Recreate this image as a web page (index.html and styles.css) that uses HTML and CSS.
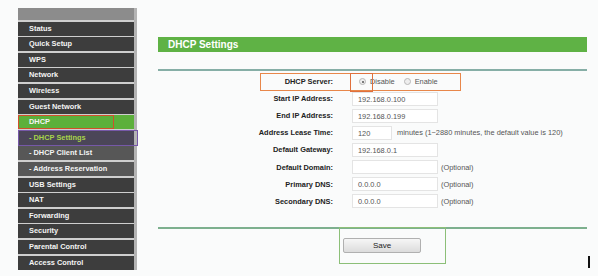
FILE: index.html
```html
<!DOCTYPE html>
<html lang="en">
<head>
    <meta charset="UTF-8">
    <title>DHCP Settings</title>
    <link rel="stylesheet" href="styles.css">
</head>
<body>
    <div class="page">
        <div class="side">
            <div class="side-top"></div>
            <div class="item">Status</div>
            <div class="item">Quick Setup</div>
            <div class="item">WPS</div>
            <div class="item">Network</div>
            <div class="item">Wireless</div>
            <div class="item">Guest Network</div>
            <div class="item active">DHCP<span class="mark-red"></span></div>
            <div class="item sub current">- DHCP Settings<span class="mark-purple"></span></div>
            <div class="item sub">- DHCP Client List</div>
            <div class="item sub">- Address Reservation</div>
            <div class="item">USB Settings</div>
            <div class="item">NAT</div>
            <div class="item">Forwarding</div>
            <div class="item">Security</div>
            <div class="item">Parental Control</div>
            <div class="item">Access Control</div>
        </div>

        <div class="main">
            <div class="title">DHCP Settings</div>
            <div class="rule"></div>

            <div class="form">
                <div class="row server">
                    <label>DHCP Server:</label>
                    <div class="field">
                        <span class="radio on"></span><span class="opt">Disable</span>
                        <span class="radio"></span><span class="opt">Enable</span>
                    </div>
                    <span class="mark-server"></span>
                    <span class="mark-radio"></span>
                </div>
                <div class="row">
                    <label>Start IP Address:</label>
                    <div class="field"><span class="input">192.168.0.100</span></div>
                </div>
                <div class="row">
                    <label>End IP Address:</label>
                    <div class="field"><span class="input">192.168.0.199</span></div>
                </div>
                <div class="row">
                    <label>Address Lease Time:</label>
                    <div class="field"><span class="input short">120</span><span class="note wide">minutes (1~2880 minutes, the default value is 120)</span></div>
                </div>
                <div class="row">
                    <label>Default Gateway:</label>
                    <div class="field"><span class="input">192.168.0.1</span></div>
                </div>
                <div class="row">
                    <label>Default Domain:</label>
                    <div class="field"><span class="input"></span><span class="note">(Optional)</span></div>
                </div>
                <div class="row">
                    <label>Primary DNS:</label>
                    <div class="field"><span class="input">0.0.0.0</span><span class="note">(Optional)</span></div>
                </div>
                <div class="row">
                    <label>Secondary DNS:</label>
                    <div class="field"><span class="input">0.0.0.0</span><span class="note">(Optional)</span></div>
                </div>
            </div>

            <div class="rule bottom"></div>
            <div class="actions">
                <button class="save">Save</button>
                <span class="mark-save"></span>
            </div>
            <span class="cursor"></span>
        </div>
    </div>
</body>
</html>
```

FILE: styles.css
```css
body {
    margin: 0;
    background: #fafbfb;
    font-family: "Liberation Sans", Arial, sans-serif;
    width: 598px;
    height: 276px;
    overflow: hidden;
}
.page {
    display: flex;
    align-items: flex-start;
}
.side {
    margin: 8px 0 0 18px;
    width: 116px;
    border-right: 3px solid #b4b4b4;
    background: #cfcfcf;
    display: flex;
    flex-direction: column;
    gap: 1.6px;
}
.side-top {
    height: 12px;
    background: #8c8c8c;
}
.item {
    position: relative;
    height: 14px;
    line-height: 14px;
    padding-left: 11px;
    background: #3d3d3d;
    color: #f4f4f4;
    font-size: 7.4px;
    font-weight: bold;
    white-space: nowrap;
}
.item.sub {
    background: #575757;
}
.item.active {
    background: #5cb03b;
}
.item.current {
    background: #4b4658;
    color: #a8d44a;
}
.mark-red {
    position: absolute;
    left: 0;
    top: 0;
    width: 96px;
    height: 14px;
    border: 1px solid #d0502a;
    box-sizing: border-box;
}
.mark-purple {
    position: absolute;
    left: 0;
    top: -1px;
    width: 120px;
    height: 16px;
    border: 1px solid #7658a8;
    box-sizing: border-box;
}
.main {
    position: relative;
    margin: 37px 0 0 21px;
    width: 429px;
}
.title {
    height: 15px;
    line-height: 15px;
    background: #5fb245;
    color: #fff;
    font-size: 10px;
    font-weight: bold;
    padding-left: 10px;
}
.rule {
    margin-top: 17px;
    height: 2px;
    background: #86aea6;
}
.form {
    margin-top: 2px;
}
.row {
    position: relative;
    display: grid;
    grid-template-columns: 175px 1fr;
    column-gap: 19px;
    height: 17.1px;
    align-items: center;
}
.row label {
    text-align: right;
    font-size: 7.4px;
    font-weight: bold;
    color: #222;
}
.field {
    display: flex;
    align-items: center;
    font-size: 7.4px;
    color: #555;
}
.input {
    box-sizing: border-box;
    width: 86px;
    height: 14px;
    line-height: 13px;
    padding-left: 5px;
    border: 1px solid #e4e4e4;
    background: #fff;
}
.input.short {
    width: 40px;
}
.note {
    margin-left: 3px;
}
.note.wide {
    margin-left: 5px;
}
.radio {
    box-sizing: border-box;
    width: 7px;
    height: 7px;
    border-radius: 50%;
    border: 1px solid #b8b8b8;
    background: #eee;
    margin: 0 4px 0 7px;
    position: relative;
}
.radio + .opt + .radio {
    margin-left: 9px;
}
.radio.on::after {
    content: "";
    position: absolute;
    left: 1.5px;
    top: 1.5px;
    width: 2px;
    height: 2px;
    border-radius: 50%;
    background: #555;
}
.mark-server {
    position: absolute;
    left: 102px;
    top: 0;
    width: 201px;
    height: 18px;
    border: 1px solid #e8874a;
    box-sizing: border-box;
}
.mark-radio {
    position: absolute;
    left: 192px;
    top: 0;
    width: 23px;
    height: 19px;
    border: 1px solid #e0703c;
    box-sizing: border-box;
}
.rule.bottom {
    margin-top: 17px;
    background: #7db08e;
}
.actions {
    position: relative;
    padding: 5px 0 0 185px;
    height: 30px;
}
.save {
    width: 78px;
    height: 15px;
    padding: 0;
    font-family: "Liberation Sans", Arial, sans-serif;
    font-size: 8px;
    color: #222;
    border: 1px solid #b0b0b0;
    border-radius: 2px;
    background: linear-gradient(#f6f6f6, #dcdcdc);
}
.mark-save {
    position: absolute;
    left: 181px;
    top: -2px;
    width: 107px;
    height: 37px;
    border: 1px solid #8cbf78;
    box-sizing: border-box;
}
.cursor {
    position: absolute;
    left: 430px;
    top: 219px;
    width: 2px;
    height: 12px;
    background: #111;
}
```
